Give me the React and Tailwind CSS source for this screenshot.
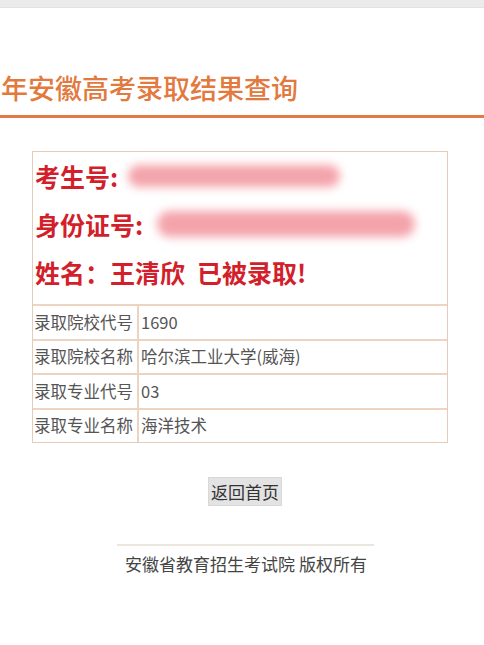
export default function App() {
  const rows = [
    ["录取院校代号", "1690"],
    ["录取院校名称", "哈尔滨工业大学(威海)"],
    ["录取专业代号", "03"],
    ["录取专业名称", "海洋技术"],
  ];
  return (
    <div
      className="w-[484px] min-h-[645px] bg-white overflow-hidden"
      style={{ fontFamily: '"Noto Sans CJK SC", "Noto Sans", sans-serif' }}
    >
      <div className="h-[8px] bg-[#ebebeb] border-b border-[#e2e2e2]" />
      <div className="pt-[62px] pl-[1px] h-[107px] whitespace-nowrap">
        <span className="text-[27px] leading-[36px] text-[#e2793e] font-medium">
          年安徽高考录取结果查询
        </span>
      </div>
      <div className="h-[3px] bg-[#e27a44]" />

      <div className="mt-[33px] ml-[32px] w-[416px] border border-[#e6cbb8]">
        <div className="px-[2px] pt-[0px] pb-[6px] text-[25px] leading-[48px] font-bold text-[#d21f2b] h-[152px]">
          <div className="flex items-center">
            <span>考生号:</span>
            <span className="ml-[10px] h-[22px] w-[212px] rounded-full bg-[#f4a3ab] blur-[5px]" />
          </div>
          <div className="flex items-center">
            <span>身份证号:</span>
            <span className="ml-[14px] h-[26px] w-[258px] rounded-full bg-[#f4a3ab] blur-[5px]" />
          </div>
          <div className="whitespace-nowrap">
            姓名：王清欣<span className="ml-[12px]">已被录取!</span>
          </div>
        </div>
        {rows.map(([k, v]) => (
          <div key={k} className="flex border-t-2 border-[#ecd3c2] h-[34.5px] text-[16.5px] text-[#555]">
            <div className="w-[106px] pl-[1px] flex items-center border-r-2 border-[#ecd3c2] whitespace-nowrap">
              {k}
            </div>
            <div className="flex-1 pl-[2px] flex items-center whitespace-nowrap">{v}</div>
          </div>
        ))}
      </div>

      <div className="flex justify-center mt-[34px] pl-[6px]">
        <button className="h-[29px] px-[2px] bg-[#e3e3e3] border border-[#d8d8d8] text-[17px] leading-[27px] text-[#333]">
          返回首页
        </button>
      </div>

      <div className="mt-[38px] ml-[117px] w-[257px] h-[2px] bg-[#ebe7df]" />
      <div className="mt-[6px] text-center pl-[8px] text-[17px] leading-[24px] text-[#444]">
        安徽省教育招生考试院 版权所有
      </div>
    </div>
  );
}
